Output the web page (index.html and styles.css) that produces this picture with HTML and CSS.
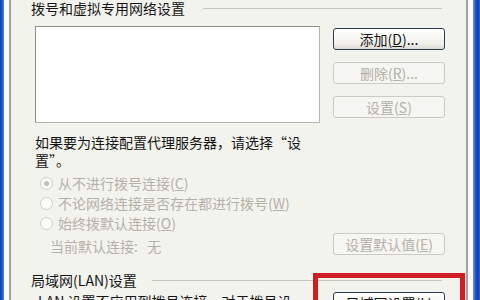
FILE: index.html
```html
<!DOCTYPE html>
<html lang="zh-CN">
<head>
    <meta charset="UTF-8">
    <title>Internet 选项 - 连接</title>
    <link rel="stylesheet" href="styles.css">
</head>
<body>
    <div class="window">
        <div class="frame-l"></div>
        <div class="bevel-l"></div>
        <div class="content">
            <div class="group-head">
                <span class="title">拨号和虚拟专用网络设置</span>
                <span class="rule"></span>
            </div>
            <div class="dial-row">
                <div class="list"></div>
                <div class="btn-col">
                    <div class="btn">添加(<u>D</u>)...</div>
                    <div class="btn disabled">删除(<u>R</u>)...</div>
                    <div class="btn disabled">设置(<u>S</u>)</div>
                </div>
            </div>
            <p class="hint">如果要为连接配置代理服务器，请选择“设置”。</p>
            <ul class="radios">
                <li><span class="radio checked"></span>从不进行拨号连接(<u>C</u>)</li>
                <li><span class="radio"></span>不论网络连接是否存在都进行拨号(<u>W</u>)</li>
                <li><span class="radio"></span>始终拨默认连接(<u>O</u>)</li>
            </ul>
            <div class="default-row">
                <span class="current">当前默认连接:&nbsp;&nbsp; 无</span>
                <div class="btn disabled">设置默认值(<u>E</u>)</div>
            </div>
            <div class="group-head lan-head">
                <span class="title">局域网(LAN)设置</span>
                <span class="rule"></span>
            </div>
            <div class="lan-row">
                <p class="lan-text">LAN 设置不应用到拨号连接。对于拨号设置，单击上面的“设置”按钮。</p>
                <div class="btn">局域网设置(<u>L</u>)</div>
            </div>
            <div class="mark"></div>
        </div>
        <div class="bevel-r"></div>
        <div class="frame-r"></div>
    </div>
</body>
</html>
```

FILE: styles.css
```css
*{
    padding: 0;
    margin: 0;
    box-sizing: border-box;
}
li{
    list-style: none;
}
body{
    width: 480px;
    height: 300px;
    overflow: hidden;
    background-color: #f3f3ee;
    font-family: "Noto Sans CJK SC", "Liberation Sans", sans-serif;
    font-size: 14px;
    color: #151515;
}
u{
    text-decoration: underline;
}
.window{
    display: flex;
    height: 300px;
    overflow: hidden;
}
.frame-l{
    width: 4px;
    background: linear-gradient(to right, #0f3fa8, #2a62d2 70%, #6a96e4);
}
.bevel-l{
    width: 7px;
    background-color: #fbfbf8;
    border-right: 2px solid #a3a39c;
}
.bevel-r{
    width: 7px;
    background-color: #fbfbf8;
    border-left: 2px solid #a3a39c;
}
.frame-r{
    width: 7px;
    background: linear-gradient(to right, #6a96e4, #1b4fc0 40%, #0f3fa8 70%, #2a62d2);
}
.content{
    flex: 1;
    position: relative;
    overflow: hidden;
    padding: 0 21px 0 20px;
    display: flex;
    flex-direction: column;
}
.group-head{
    display: flex;
    align-items: center;
    height: 16px;
    line-height: 16px;
    margin-right: 3px;
}
.rule{
    flex: 1;
    height: 1px;
    margin-left: 18px;
    background-color: #c5c4bd;
}
.dial-row{
    display: flex;
    margin: 10px 0 0 4px;
}
.list{
    width: 285px;
    height: 97px;
    background-color: #fff;
    border: 1px solid #b6b6b0;
    border-top-color: #8e8e88;
    border-left-color: #8e8e88;
}
.btn-col{
    margin: 2px 0 0 13px;
    display: flex;
    flex-direction: column;
    gap: 12px;
}
.btn{
    width: 112px;
    height: 22px;
    line-height: 20px;
    text-align: center;
    border: 1px solid #2e3b54;
    border-radius: 3px;
    background: linear-gradient(#ffffff, #f2f1ec 70%, #dcdbd3);
    color: #151515;
}
.btn.disabled{
    border-color: #cdcbc0;
    background: #f5f5f1;
    color: #b3b1a8;
}
.hint{
    width: 272px;
    margin: 10px 0 0 4px;
    line-height: 18px;
}
.radios{
    margin: 4px 0 0 9px;
    color: #b3b1a8;
}
.radios li{
    display: flex;
    align-items: center;
    height: 20px;
}
.radio{
    width: 13px;
    height: 13px;
    margin-right: 5px;
    border: 1px solid #cfcdc3;
    border-radius: 50%;
    background-color: #fbfbf8;
    display: flex;
    align-items: center;
    justify-content: center;
}
.radio.checked::after{
    content: "";
    width: 5px;
    height: 5px;
    border-radius: 50%;
    background-color: #c2c0b7;
}
.default-row{
    display: flex;
    justify-content: space-between;
    align-items: center;
    height: 22px;
    margin-left: 19px;
}
.current{
    color: #b3b1a8;
    padding-top: 4px;
}
.lan-head{
    margin-top: 17px;
}
.lan-head .rule{
    margin-left: 15px;
}
.lan-row{
    display: flex;
    justify-content: space-between;
    margin: 4px 0 0 7px;
}
.lan-text{
    width: 262px;
    line-height: 18px;
}
.mark{
    position: absolute;
    left: 302px;
    top: 273px;
    width: 152px;
    height: 40px;
    border: 5px solid #cf1d24;
}
```
